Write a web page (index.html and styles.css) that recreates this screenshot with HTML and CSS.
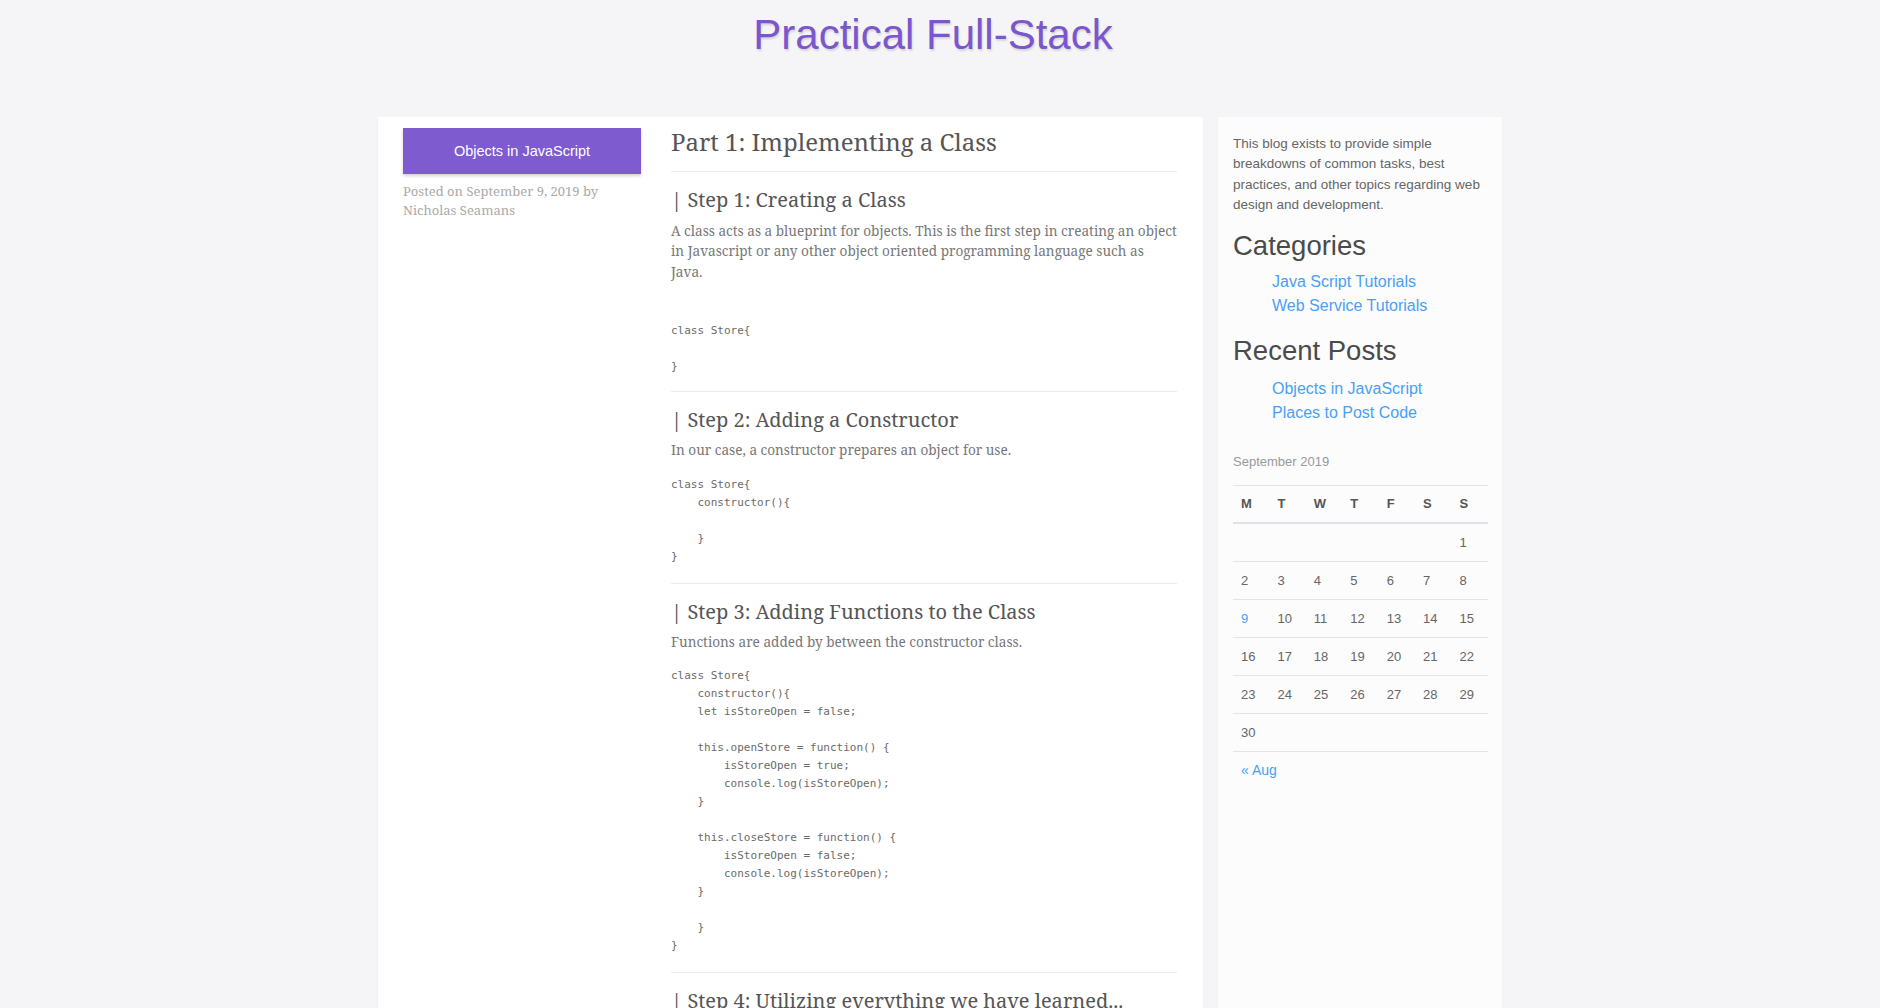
FILE: index.html
```html
<!DOCTYPE html>
<html lang="en">
<head>
<meta charset="utf-8">
<title>Practical Full-Stack</title>
<link rel="stylesheet" href="styles.css">
</head>
<body>
<header class="site-header">
  <h1 class="site-title">Practical Full-Stack</h1>
</header>
<div class="layout">
  <main class="post-card">
    <div class="post-meta">
      <a class="post-badge" href="#">Objects in JavaScript</a>
      <p class="posted">Posted on September 9, 2019 by Nicholas Seamans</p>
    </div>
    <article class="post-body">
      <h2 class="post-title">Part 1: Implementing a Class</h2>
      <section class="step step-first">
        <h3 class="step-title">| Step 1: Creating a Class</h3>
        <p class="step-text step-text-spaced">A class acts as a blueprint for objects. This is the first step in creating an object in Javascript or any other object oriented programming language such as Java.</p>
<pre class="code">class Store{

}</pre>
      </section>
      <section class="step">
        <h3 class="step-title">| Step 2: Adding a Constructor</h3>
        <p class="step-text">In our case, a constructor prepares an object for use.</p>
<pre class="code">class Store{
    constructor(){

    }
}</pre>
      </section>
      <section class="step">
        <h3 class="step-title">| Step 3: Adding Functions to the Class</h3>
        <p class="step-text">Functions are added by between the constructor class.</p>
<pre class="code">class Store{
    constructor(){
    let isStoreOpen = false;

    this.openStore = function() {
        isStoreOpen = true;
        console.log(isStoreOpen);
    }

    this.closeStore = function() {
        isStoreOpen = false;
        console.log(isStoreOpen);
    }

    }
}</pre>
      </section>
      <section class="step step-last">
        <h3 class="step-title">| Step 4: Utilizing everything we have learned...</h3>
        <p class="step-text">Now that the class is complete, we can create an instance of it and call its functions.</p>
<pre class="code">let myStore = new Store();
myStore.openStore();
myStore.closeStore();</pre>
      </section>
    </article>
  </main>
  <aside class="sidebar">
    <p class="about">This blog exists to provide simple breakdowns of common tasks, best practices, and other topics regarding web design and development.</p>
    <h3 class="widget-title widget-title-first">Categories</h3>
    <ul class="widget-list">
      <li><a href="#">Java Script Tutorials</a></li>
      <li><a href="#">Web Service Tutorials</a></li>
    </ul>
    <h3 class="widget-title">Recent Posts</h3>
    <ul class="widget-list">
      <li><a href="#">Objects in JavaScript</a></li>
      <li><a href="#">Places to Post Code</a></li>
    </ul>
    <table class="calendar">
      <caption>September 2019</caption>
      <thead>
        <tr><th>M</th><th>T</th><th>W</th><th>T</th><th>F</th><th>S</th><th>S</th></tr>
      </thead>
      <tbody>
        <tr><td></td><td></td><td></td><td></td><td></td><td></td><td>1</td></tr>
        <tr><td>2</td><td>3</td><td>4</td><td>5</td><td>6</td><td>7</td><td>8</td></tr>
        <tr><td><a href="#">9</a></td><td>10</td><td>11</td><td>12</td><td>13</td><td>14</td><td>15</td></tr>
        <tr><td>16</td><td>17</td><td>18</td><td>19</td><td>20</td><td>21</td><td>22</td></tr>
        <tr><td>23</td><td>24</td><td>25</td><td>26</td><td>27</td><td>28</td><td>29</td></tr>
        <tr class="last-row"><td>30</td><td></td><td></td><td></td><td></td><td></td><td></td></tr>
      </tbody>
      <tfoot>
        <tr><td colspan="3" class="cal-nav"><a href="#">&laquo; Aug</a></td><td colspan="4"></td></tr>
      </tfoot>
    </table>
  </aside>
</div>
</body>
</html>
```

FILE: styles.css
```css
html, body {
  margin: 0;
  padding: 0;
}

body {
  background: #f5f5f7;
  font-family: "Liberation Sans", Arial, sans-serif;
  color: #666;
}

a {
  text-decoration: none;
}

.site-header {
  height: 117px;
  padding-top: 11px;
  box-sizing: border-box;
  text-align: center;
}

.site-title {
  margin: 0;
  padding-right: 14px;
  font-family: "Liberation Sans", Arial, sans-serif;
  font-weight: normal;
  font-size: 42px;
  line-height: 47px;
  color: #7b56cd;
  text-shadow: 1px 2px 2px rgba(0, 0, 0, 0.13);
}

.layout {
  width: 1124px;
  margin: 0 auto;
  display: flex;
  gap: 15px;
  align-items: stretch;
}

.post-card {
  width: 825px;
  box-sizing: border-box;
  background: #fff;
  padding: 10px 26px 40px 25px;
  display: flex;
  gap: 30px;
  box-shadow: 0 1px 2px rgba(0, 0, 0, 0.04);
}

.post-meta {
  width: 238px;
  flex: none;
}

.post-badge {
  display: block;
  margin-top: 1px;
  height: 46px;
  line-height: 46px;
  background: #7e5bcf;
  color: #fff;
  text-align: center;
  font-family: "Liberation Sans", Arial, sans-serif;
  font-size: 14.5px;
  box-shadow: 0 2px 3px rgba(0, 0, 0, 0.18);
}

.posted {
  margin: 8px 0 0;
  font-family: "Noto Serif", "Droid Serif", "DejaVu Serif", serif;
  font-size: 13px;
  line-height: 19px;
  color: #aaa;
}

.post-body {
  flex: 1;
  min-width: 0;
  font-family: "Noto Serif", "Droid Serif", "DejaVu Serif", serif;
}

.post-title {
  margin: 0;
  font-weight: normal;
  font-size: 24px;
  line-height: 30px;
  color: #555;
  padding-bottom: 14px;
  border-bottom: 1px solid #eaeaea;
}

.step {
  border-bottom: 1px solid #eaeaea;
  padding: 14px 0 17px;
}

.step-first {
  padding-bottom: 15px;
}

.step-title {
  margin: 0 0 6px;
  font-weight: normal;
  font-size: 20px;
  line-height: 28px;
  color: #555;
}

.step-text {
  margin: 0 0 15px;
  font-size: 13.6px;
  line-height: 20.4px;
  color: #777;
}

.step-text-spaced {
  margin-top: 7px;
  margin-bottom: 40px;
}

.code {
  margin: 0;
  font-family: "DejaVu Sans Mono", "Liberation Mono", monospace;
  font-size: 11px;
  line-height: 18px;
  color: #6a6a6a;
}

.sidebar {
  width: 284px;
  box-sizing: border-box;
  background: #fcfcfd;
  padding: 17px 14px 15px 15px;
  box-shadow: 0 1px 2px rgba(0, 0, 0, 0.04);
}

.about {
  margin: 0;
  font-size: 13.5px;
  line-height: 20.4px;
  color: #666;
}

.widget-title {
  margin: 16.5px 0 8.5px;
  font-weight: normal;
  font-size: 27.5px;
  line-height: 34px;
  color: #4a4a4a;
}

.widget-title-first {
  margin-top: 13px;
  margin-bottom: 7px;
}

.widget-list {
  margin: 0;
  padding-left: 39px;
  list-style: none;
  font-size: 16px;
  line-height: 24px;
}

.widget-list a,
.calendar a {
  color: #4a9ff5;
}

.calendar {
  width: 100%;
  margin-top: 27px;
  border-collapse: collapse;
  table-layout: fixed;
  font-size: 13px;
}

.calendar caption {
  text-align: left;
  color: #999;
  font-size: 13px;
  line-height: 20px;
  padding-bottom: 13px;
}

.calendar th {
  text-align: left;
  font-size: 13px;
  font-weight: bold;
  color: #555;
  padding: 8px;
  line-height: 20px;
  border-top: 1px solid #e4e4e8;
  border-bottom: 2px solid #e0e0e6;
}

.calendar td {
  text-align: left;
  color: #666;
  padding: 8px;
  line-height: 21px;
  border-top: 1px solid #e4e4e8;
}

.calendar .last-row td {
  border-bottom: 1px solid #e4e4e8;
}

.calendar tfoot td {
  border-top: none;
}

.calendar .cal-nav {
  font-size: 14px;
}
```
